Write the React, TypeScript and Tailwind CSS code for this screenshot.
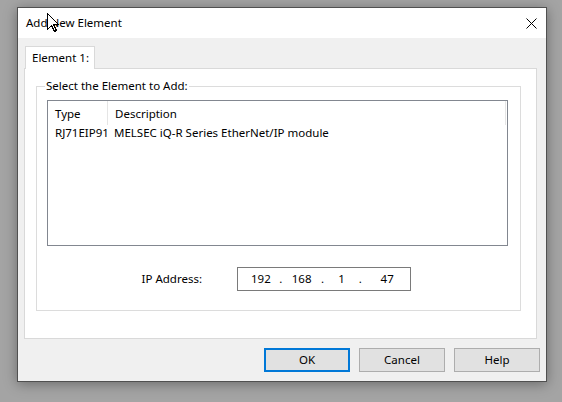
import React from "react";

const font = { fontFamily: '"Noto Sans", "Open Sans", sans-serif' };

function Cursor() {
  return (
    <svg
      className="absolute left-[47px] top-[13px]"
      width="13"
      height="20"
      viewBox="0 0 13 20"
    >
      <path
        d="M0.5 0.5 L0.5 16.5 L4.5 12.5 L7.5 18.5 L9.5 17.5 L6.5 11.5 L11.5 11.5 Z"
        fill="#ffffff"
        stroke="#000000"
        strokeWidth="1"
        shapeRendering="crispEdges"
      />
    </svg>
  );
}

function Btn({ label, primary }: { label: string; primary?: boolean }) {
  return (
    <div
      className={
        "w-[86px] h-[24px] flex items-center justify-center bg-[#e1e1e1] text-[11.5px] text-black " +
        (primary ? "border-2 border-[#0078d7]" : "border border-[#adadad]")
      }
    >
      {label}
    </div>
  );
}

export default function App() {
  return (
    <div
      className="relative w-[562px] h-[402px] overflow-hidden bg-[#a4a4a4] pt-[7px] pl-[17px] text-black"
      style={font}
    >
      <div className="w-[530px] h-[375px] border border-[#505050] bg-[#f0f0f0] flex flex-col shadow-[0_2px_12px_rgba(0,0,0,0.35)]">
        {/* title bar */}
        <div className="h-[30px] bg-white flex items-center justify-between pl-[8px] pr-[9px]">
          <span className="text-[11.5px] leading-[16px]">Add New Element</span>
          <svg width="11" height="11" viewBox="0 0 11 11">
            <path d="M0.5 0.5 L10.5 10.5 M10.5 0.5 L0.5 10.5" stroke="#000" strokeWidth="1" />
          </svg>
        </div>
        {/* body */}
        <div className="flex-1 flex flex-col px-[6px] pt-[8px]">
          <div className="flex">
            <div className="relative z-10 ml-[1px] -mb-px w-[70px] h-[23px] border border-b-0 border-[#d9d9d9] bg-white flex items-center pl-[6px] text-[11.5px]">
              Element 1:
            </div>
          </div>
          <div className="w-[513px] h-[271px] border border-[#d9d9d9] bg-white pl-[11px] pt-[9px]">
            <fieldset className="w-[485px] h-[233px] border border-[#dcdcdc] pl-[10px]">
              <legend className="ml-[-2px] px-[1px] text-[11.5px] leading-[16px]">
                Select the Element to Add:
              </legend>
              <div className="mt-[6px] w-[461px] h-[146px] border border-[#828790] bg-white text-[11.5px]">
                <div className="flex h-[24px]">
                  <div className="w-[60px] pl-[7px] pt-[2px] flex items-center border-r border-[#e5e5e5]">Type</div>
                  <div className="flex-1 pl-[7px] pt-[2px] flex items-center border-r border-[#e5e5e5] mr-[1px]">Description</div>
                </div>
                <div className="flex h-[16px] items-center">
                  <div className="w-[60px] pl-[7px]">RJ71EIP91</div>
                  <div className="pl-[6px]">MELSEC iQ-R Series EtherNet/IP module</div>
                </div>
              </div>
              <div className="mt-[21px] flex items-center text-[11.5px]">
                <div className="w-[155px] text-right">IP Address:</div>
                <div className="ml-[35px] w-[174px] h-[24px] border border-[#7a7a7a] flex items-center pl-[7px]">
                  <span className="w-[32px] text-center">192</span>
                  <span className="w-[8px] text-center">.</span>
                  <span className="w-[34px] text-center">168</span>
                  <span className="w-[8px] text-center">.</span>
                  <span className="w-[30px] text-center">1</span>
                  <span className="w-[8px] text-center">.</span>
                  <span className="w-[46px] text-center">47</span>
                </div>
              </div>
            </fieldset>
          </div>
          <div className="mt-[9px] flex justify-end gap-[9px]">
            <Btn label="OK" primary />
            <Btn label="Cancel" />
            <Btn label="Help" />
          </div>
        </div>
      </div>
      <Cursor />
    </div>
  );
}
